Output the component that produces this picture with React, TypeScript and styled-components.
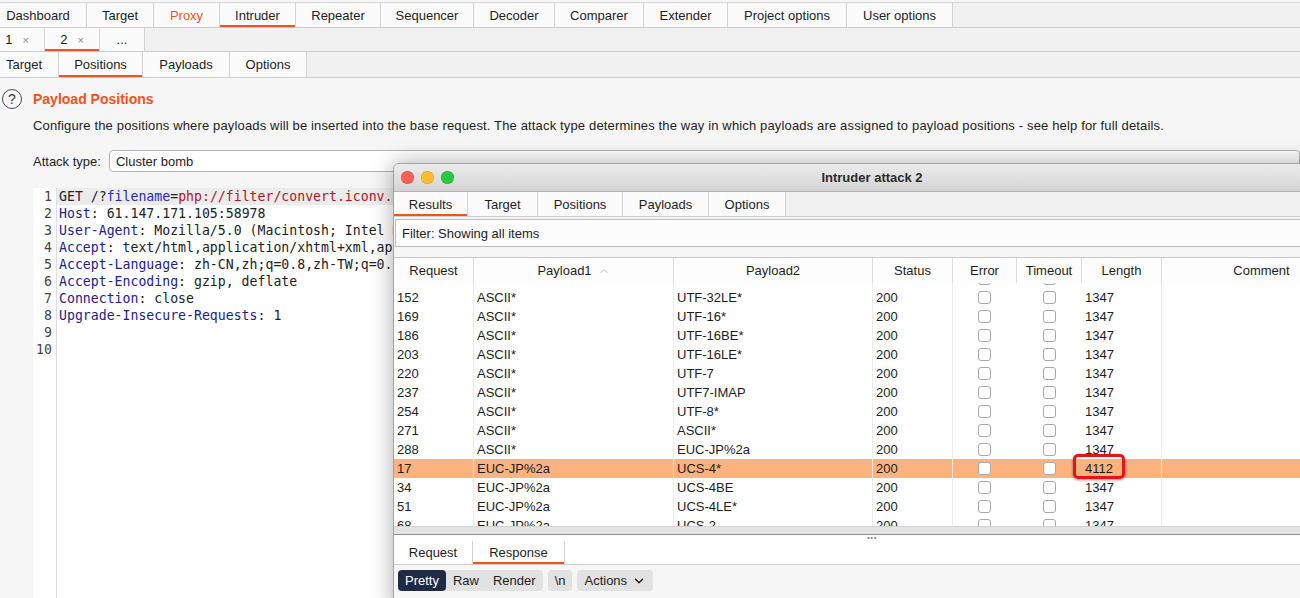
import React from 'react';
import styled, { createGlobalStyle } from 'styled-components';
import { ChevronUp, ChevronDown } from 'lucide-react';

const GlobalStyle = createGlobalStyle`
  html, body {
    margin: 0;
    padding: 0;
  }
  body {
    background: #f6f6f6;
    font-family: "Liberation Sans", Arial, sans-serif;
    font-size: 13px;
    color: #1d1d1d;
    overflow: hidden;
  }
  * {
    box-sizing: border-box;
  }
`;

const ACCENT = '#f1531d';

const Page = styled.div`
  position: relative;
  width: 1300px;
  height: 598px;
  overflow: hidden;
  display: flex;
  flex-direction: column;
`;

const TabStrip = styled.div<{ $h: number; $top?: boolean; $bleed?: boolean; $bg?: string }>`
  display: flex;
  flex-shrink: 0;
  height: ${p => p.$h}px;
  background: ${p => p.$bg || '#f1f1f1'};
  border-bottom: 1px solid #cdcdcd;
  ${p => p.$top && 'margin-top: 2px; border-top: 1px solid #d6d6d6;'}
  ${p => p.$bleed && 'margin-left: -10px;'}
`;

const Tab = styled.div<{ $w: number; $active?: boolean; $accent?: boolean; $bg?: string }>`
  width: ${p => p.$w}px;
  flex-shrink: 0;
  display: flex;
  align-items: center;
  justify-content: center;
  background: ${p => p.$bg || '#fbfbfb'};
  border-right: 1px solid #d3d3d3;
  color: ${p => (p.$accent ? ACCENT : '#1d1d1d')};
  box-shadow: ${p => (p.$active ? `inset 0 -2px 0 ${ACCENT}` : 'none')};
  white-space: nowrap;
`;

const CloseMark = styled.span`
  margin-left: 10px;
  font-size: 11px;
  color: #8a8a8a;
`;

const Content = styled.div`
  flex: 1;
  display: flex;
  flex-direction: column;
  padding-top: 11px;
  min-height: 0;
`;

const HeadingRow = styled.div`
  display: flex;
  align-items: center;
  gap: 11px;
  height: 20px;
  padding-left: 2px;
`;

const HelpIcon = styled.span`
  width: 20px;
  height: 20px;
  border-radius: 50%;
  border: 1.5px solid #4a4a4a;
  display: flex;
  align-items: center;
  justify-content: center;
  font-size: 14px;
  color: #3a3a3a;
`;

const Heading = styled.h2`
  margin: 0;
  font-size: 14px;
  font-weight: 700;
  color: ${ACCENT};
`;

const Description = styled.p`
  margin: 9px 0 0;
  padding-left: 33px;
  line-height: 16px;
  letter-spacing: 0.15px;
  white-space: nowrap;
`;

const AttackRow = styled.div`
  display: flex;
  align-items: center;
  gap: 8px;
  margin-top: 16px;
  padding-left: 33px;
`;

const SelectBox = styled.div`
  flex: 1;
  height: 22px;
  display: flex;
  align-items: center;
  padding-left: 6px;
  background: #fff;
  border: 1px solid #b3b3b3;
  border-radius: 4px;
`;

const Editor = styled.div`
  flex: 1;
  display: flex;
  margin: 16px 10px 0 33px;
  background: #fff;
  font-family: "DejaVu Sans Mono", "Liberation Mono", monospace;
  font-size: 13.2px;
  line-height: 17px;
`;

const Gutter = styled.div`
  width: 24px;
  padding-right: 4px;
  text-align: right;
  color: #444;
  border-right: 1px solid #dedede;
`;

const CodeArea = styled.div`
  flex: 1;
  min-width: 0;
`;

const CodeLine = styled.div<{ $current?: boolean }>`
  height: 17px;
  padding-left: 2px;
  white-space: pre;
  color: #222;
  background: ${p => (p.$current ? '#ececec' : 'transparent')};
`;

const Key = styled.span`
  color: #1d2287;
`;

const Param = styled.span`
  color: #2727c9;
`;

const Value = styled.span`
  color: #b3151c;
`;

/* attack window */

const AttackWindow = styled.div`
  position: absolute;
  left: 393px;
  top: 163px;
  width: 958px;
  height: 450px;
  display: flex;
  flex-direction: column;
  background: #f6f6f6;
  border: 1px solid #a3a3a3;
  border-radius: 6px 6px 0 0;
  box-shadow: 0 0 22px rgba(0, 0, 0, 0.33);
  overflow: hidden;
`;

const TitleBar = styled.div`
  height: 28px;
  flex-shrink: 0;
  display: grid;
  grid-template-columns: 1fr auto 1fr;
  align-items: center;
  background: linear-gradient(#ebebeb, #d5d5d5);
  border-bottom: 1px solid #b4b4b4;
`;

const Lights = styled.div`
  display: flex;
  gap: 7.5px;
  padding-left: 7px;
`;

const Light = styled.span<{ $c: string }>`
  width: 12.5px;
  height: 12.5px;
  border-radius: 50%;
  background: ${p => p.$c};
  box-shadow: inset 0 0 0 0.5px rgba(0, 0, 0, 0.15);
`;

const WindowTitle = styled.div`
  font-weight: 700;
  color: #2a2a2a;
`;

const FilterBar = styled.div`
  height: 28px;
  flex-shrink: 0;
  margin: 2px 0 0 1px;
  display: flex;
  align-items: center;
  padding-left: 6px;
  background: #fcfcfc;
  border: 1px solid #bdbdbd;
`;

const gridCols = '80px 200px 199px 80px 64px 65px 80px 200px';

const TableHead = styled.div`
  margin-top: 10px;
  height: 26px;
  flex-shrink: 0;
  display: grid;
  grid-template-columns: ${gridCols};
  background: #fdfdfd;
  border-top: 1px solid #c9c9c9;
`;

const HeadCell = styled.div`
  display: flex;
  align-items: center;
  justify-content: center;
  gap: 6px;
  border-right: 1px solid #dcdcdc;
`;

const TableBody = styled.div`
  height: 243px;
  flex-shrink: 0;
  overflow: hidden;
  background: #fff;
`;

const RowList = styled.div`
  margin-top: -14px;
`;

const Row = styled.div<{ $hl?: boolean }>`
  display: grid;
  grid-template-columns: ${gridCols};
  height: 19px;
  line-height: 19px;
  background: ${p => (p.$hl ? '#feb27e' : 'transparent')};
`;

const Cell = styled.div<{ $sep?: boolean; $center?: boolean }>`
  position: relative;
  padding-left: ${p => (p.$center ? 0 : 3)}px;
  display: flex;
  align-items: center;
  justify-content: ${p => (p.$center ? 'center' : 'flex-start')};
  border-right: 1px solid ${p => (p.$sep ? '#ececec' : 'transparent')};
  white-space: nowrap;
`;

const Check = styled.span`
  width: 13px;
  height: 13px;
  background: #fff;
  border: 1px solid #a8a8a8;
  border-radius: 3px;
`;

const Callout = styled.span`
  position: absolute;
  left: -9px;
  top: -5px;
  width: 52px;
  height: 25px;
  border: 3px solid #e5141b;
  border-radius: 5px;
  box-shadow: 0 1px 3px rgba(0, 0, 0, 0.45);
`;

const HScroll = styled.div`
  height: 9px;
  flex-shrink: 0;
  background: #e3e3e3;
  border-top: 1px solid #d2d2d2;
  border-bottom: 1px solid #8f8f8f;
`;

const SplitHandle = styled.div`
  height: 6px;
  flex-shrink: 0;
  display: flex;
  justify-content: center;
  align-items: center;
  font-size: 8px;
  line-height: 6px;
  letter-spacing: 0.5px;
  color: #8c8c8c;
  background: #fff;
`;

const Toolbar = styled.div`
  display: flex;
  align-items: center;
  gap: 5px;
  padding: 5px 4px;
`;

const SegGroup = styled.div`
  display: flex;
  height: 21px;
  background: #e2e2e2;
  border-radius: 4px;
`;

const SegButton = styled.div<{ $on?: boolean }>`
  display: flex;
  align-items: center;
  gap: 5px;
  padding: 0 7px;
  border-radius: 4px;
  background: ${p => (p.$on ? '#1f2a46' : 'transparent')};
  color: ${p => (p.$on ? '#fff' : '#1d1d1d')};
`;

const ResponsePeek = styled.div`
  padding-left: 4px;
  font-family: "DejaVu Sans Mono", monospace;
  font-size: 12px;
  color: #1d2287;
`;

const mainTabs = [
  { label: 'Dashboard', w: 97 },
  { label: 'Target', w: 67 },
  { label: 'Proxy', w: 66 },
  { label: 'Intruder', w: 76 },
  { label: 'Repeater', w: 85 },
  { label: 'Sequencer', w: 93 },
  { label: 'Decoder', w: 81 },
  { label: 'Comparer', w: 89 },
  { label: 'Extender', w: 84 },
  { label: 'Project options', w: 119 },
  { label: 'User options', w: 106 },
];

const subTabs = [
  { label: 'Target', w: 69 },
  { label: 'Positions', w: 84 },
  { label: 'Payloads', w: 87 },
  { label: 'Options', w: 77 },
];

const windowTabs = [
  { label: 'Results', w: 74 },
  { label: 'Target', w: 70 },
  { label: 'Positions', w: 85 },
  { label: 'Payloads', w: 86 },
  { label: 'Options', w: 77 },
];

const columns = [
  'Request',
  'Payload1',
  'Payload2',
  'Status',
  'Error',
  'Timeout',
  'Length',
  'Comment',
];

const rows = [
  ['135', 'ASCII*', 'UTF-32BE*', '1347'],
  ['152', 'ASCII*', 'UTF-32LE*', '1347'],
  ['169', 'ASCII*', 'UTF-16*', '1347'],
  ['186', 'ASCII*', 'UTF-16BE*', '1347'],
  ['203', 'ASCII*', 'UTF-16LE*', '1347'],
  ['220', 'ASCII*', 'UTF-7', '1347'],
  ['237', 'ASCII*', 'UTF7-IMAP', '1347'],
  ['254', 'ASCII*', 'UTF-8*', '1347'],
  ['271', 'ASCII*', 'ASCII*', '1347'],
  ['288', 'ASCII*', 'EUC-JP%2a', '1347'],
  ['17', 'EUC-JP%2a', 'UCS-4*', '4112'],
  ['34', 'EUC-JP%2a', 'UCS-4BE', '1347'],
  ['51', 'EUC-JP%2a', 'UCS-4LE*', '1347'],
  ['68', 'EUC-JP%2a', 'UCS-2', '1347'],
];

const headers: [string, string][] = [
  ['Host', '61.147.171.105:58978'],
  ['User-Agent', 'Mozilla/5.0 (Macintosh; Intel Mac OS X 10_15_7) AppleWebKit/537.36'],
  ['Accept', 'text/html,application/xhtml+xml,application/xml;q=0.9,image/webp,*/*;q=0.8'],
  ['Accept-Language', 'zh-CN,zh;q=0.8,zh-TW;q=0.7,zh-HK;q=0.5,en-US;q=0.3,en;q=0.2'],
  ['Accept-Encoding', 'gzip, deflate'],
  ['Connection', 'close'],
  ['Upgrade-Insecure-Requests', '1'],
];

export default function App() {
  return (
    <>
      <GlobalStyle />
      <Page>
        <TabStrip $h={26} $top $bleed>
          {mainTabs.map(t => (
            <Tab key={t.label} $w={t.w} $active={t.label === 'Intruder'} $accent={t.label === 'Proxy'}>
              {t.label}
            </Tab>
          ))}
        </TabStrip>
        <TabStrip $h={24} $bleed>
          <Tab $w={55}>1<CloseMark>×</CloseMark></Tab>
          <Tab $w={55} $active>2<CloseMark>×</CloseMark></Tab>
          <Tab $w={45}>...</Tab>
        </TabStrip>
        <TabStrip $h={26} $bleed>
          {subTabs.map(t => (
            <Tab key={t.label} $w={t.w} $active={t.label === 'Positions'}>
              {t.label}
            </Tab>
          ))}
        </TabStrip>

        <Content>
          <HeadingRow>
            <HelpIcon>?</HelpIcon>
            <Heading>Payload Positions</Heading>
          </HeadingRow>
          <Description>
            Configure the positions where payloads will be inserted into the base request. The attack type determines the way in which payloads are assigned to payload positions - see help for full details.
          </Description>
          <AttackRow>
            <span>Attack type:</span>
            <SelectBox>Cluster bomb</SelectBox>
          </AttackRow>
          <Editor>
            <Gutter>
              {Array.from({ length: 10 }, (_, i) => (
                <div key={i}>{i + 1}</div>
              ))}
            </Gutter>
            <CodeArea>
              <CodeLine $current>
                GET /?<Param>filename</Param>=<Value>php://filter/convert.iconv.§ASCII*§.§UTF-32BE*§/resource=flag.php</Value> HTTP/1.1
              </CodeLine>
              {headers.map(([k, v]) => (
                <CodeLine key={k}>
                  <Key>{k}</Key>: {v}
                </CodeLine>
              ))}
              <CodeLine />
              <CodeLine />
            </CodeArea>
          </Editor>
        </Content>

        <AttackWindow>
          <TitleBar>
            <Lights>
              <Light $c="#fe5f57" />
              <Light $c="#febc2e" />
              <Light $c="#28c840" />
            </Lights>
            <WindowTitle>Intruder attack 2</WindowTitle>
            <span />
          </TitleBar>
          <TabStrip $h={25}>
            {windowTabs.map(t => (
              <Tab key={t.label} $w={t.w} $active={t.label === 'Results'}>
                {t.label}
              </Tab>
            ))}
          </TabStrip>
          <FilterBar>Filter: Showing all items</FilterBar>
          <TableHead>
            {columns.map(c => (
              <HeadCell key={c}>
                {c}
                {c === 'Payload1' && <ChevronUp size={12} color="#a0a0a0" strokeWidth={1.5} />}
              </HeadCell>
            ))}
          </TableHead>
          <TableBody>
            <RowList>
              {rows.map(([req, p1, p2, len]) => {
                const hit = len === '4112';
                return (
                  <Row key={req} $hl={hit}>
                    <Cell $sep>{req}</Cell>
                    <Cell $sep>{p1}</Cell>
                    <Cell $sep>{p2}</Cell>
                    <Cell $sep>200</Cell>
                    <Cell $center><Check /></Cell>
                    <Cell $center><Check /></Cell>
                    <Cell $sep>
                      {hit && <Callout />}
                      {len}
                    </Cell>
                    <Cell />
                  </Row>
                );
              })}
            </RowList>
          </TableBody>
          <HScroll />
          <SplitHandle>•••</SplitHandle>
          <TabStrip $h={24} $bg="#fff">
            <Tab $w={79} $bg="#fff">Request</Tab>
            <Tab $w={92} $bg="#fff" $active>Response</Tab>
          </TabStrip>
          <Toolbar>
            <SegGroup>
              <SegButton $on>Pretty</SegButton>
              <SegButton>Raw</SegButton>
              <SegButton>Render</SegButton>
            </SegGroup>
            <SegGroup>
              <SegButton>\n</SegButton>
            </SegGroup>
            <SegGroup>
              <SegButton>
                Actions
                <ChevronDown size={14} strokeWidth={2.5} />
              </SegButton>
            </SegGroup>
          </Toolbar>
          <ResponsePeek>1 HTTP/1.1 200 OK</ResponsePeek>
        </AttackWindow>
      </Page>
    </>
  );
}
